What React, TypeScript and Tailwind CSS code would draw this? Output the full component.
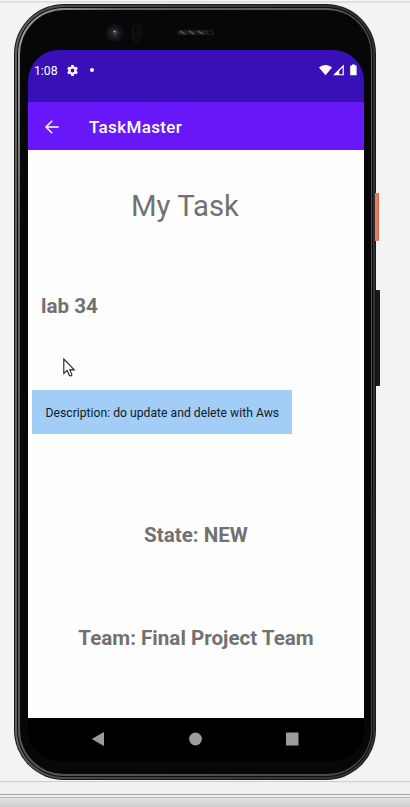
import React from "react";

function StatusBar() {
  return (
    <div className="flex h-[52px] items-start bg-[#3910b8] pt-[14px] pl-[6px] text-white">
      <span className="w-[24px] whitespace-nowrap text-[12.2px] leading-[15px]">1:08</span>
      <svg className="ml-[8px]" width="13" height="13" viewBox="0 0 24 24" fill="white" fillRule="evenodd">
        <path d="M19.43 12.98c.04-.32.07-.64.07-.98s-.03-.66-.07-.98l2.11-1.65c.19-.15.24-.42.12-.64l-2-3.46c-.12-.22-.39-.3-.61-.22l-2.49 1c-.52-.4-1.08-.73-1.69-.98l-.38-2.65A.49.49 0 0 0 14 2h-4c-.25 0-.46.18-.49.42l-.38 2.65c-.61.25-1.17.59-1.69.98l-2.49-1c-.23-.09-.49 0-.61.22l-2 3.46c-.13.22-.07.49.12.64l2.11 1.65c-.04.32-.07.65-.07.98s.03.66.07.98l-2.11 1.65c-.19.15-.24.42-.12.64l2 3.46c.12.22.39.3.61.22l2.49-1c.52.4 1.08.73 1.69.98l.38 2.65c.03.24.24.42.49.42h4c.25 0 .46-.18.49-.42l.38-2.65c.61-.25 1.17-.59 1.69-.98l2.49 1c.23.09.49 0 .61-.22l2-3.46c.12-.22.07-.49-.12-.64l-2.11-1.65zM12 15.5a3.5 3.5 0 1 1 0-7 3.5 3.5 0 0 1 0 7z" />
      </svg>
      <span className="mt-[4px] ml-[11px] size-[4px] rounded-full bg-white" />
      <svg className="mr-[6px] ml-auto" width="39" height="12" viewBox="0 0 39 12" fill="white">
        <path d="M0 3.6C3.5.2 9.5.2 13 3.6L6.5 11.3Z" />
        <path fillRule="evenodd" d="M14 11.3L24.8.6V11.3ZM20.2 10.2H23.6V3.6L20.2 7Z" />
        <path d="M31.2 1.5h1.8V.4h3v1.1h1.6v9.8h-6.4z" />
      </svg>
    </div>
  );
}

function AppBar() {
  return (
    <div className="flex h-[48px] items-center bg-[#6818f8] pt-[1px] pl-[17px] text-white">
      <svg width="14" height="14" viewBox="0 0 14 14" fill="none" stroke="white" strokeWidth="1.5">
        <path d="M13.7 7H1.2M7.2.8L1 7l6.2 6.2" />
      </svg>
      <span className="ml-[30px] text-[17px] leading-[22px] font-medium tracking-[0.35px]">TaskMaster</span>
    </div>
  );
}

function Cursor() {
  return (
    <svg className="mt-[39px] ml-[35px] block" width="13" height="19" viewBox="0 0 13 19" fill="white" stroke="#222" strokeWidth="1.1">
      <path d="M.8 1v14.5l3.3-3.1 2.4 5.2c.8.7 2.5 0 2.4-1l-2.1-4.7h4.5z" />
    </svg>
  );
}

function NavBar() {
  return (
    <svg className="block" width="336" height="42" viewBox="0 0 336 42" fill="#9c9c9c">
      <path d="M63.800 21L75 14.500q1-.5 1 .6v12q0 1-1 .5z" />
      <circle cx="167.500" cy="21" r="6.400" />
      <rect x="258" y="14.500" width="12.500" height="13" rx=".5" />
    </svg>
  );
}

function Screen() {
  return (
    <div className="flex h-[711px] w-[336px] flex-col overflow-hidden rounded-t-[31px] rounded-b-[31px] bg-black">
      <StatusBar />
      <AppBar />
      <main className="h-[568px] bg-[#fefefe] text-[#717171]">
        <h1 className="mt-[36px] pr-[22px] text-center text-[29.3px] leading-[40px] font-normal">My Task</h1>
        <h2 className="mt-[67px] ml-[13px] text-[20.6px] leading-[26px] font-bold">lab 34</h2>
        <Cursor />
        <div className="mt-[13px] ml-[4px] flex h-[44px] w-[260px] items-center bg-[#a2cdf6] pt-[2px] pl-[13.5px] text-[12.2px] whitespace-nowrap text-[#111b25]">
          Description: do update and delete with Aws
        </div>
        <p className="mt-[88px] text-center text-[20.6px] leading-[26px] font-bold">State: NEW</p>
        <p className="mt-[77px] text-center text-[20.6px] leading-[26px] font-bold">Team: Final Project Team</p>
      </main>
      <NavBar />
    </div>
  );
}

function Camera() {
  return (
    <svg className="block" width="336" height="38" viewBox="0 -1 336 38">
      <circle cx="86.500" cy="20" r="8.500" fill="#141416" />
      <circle cx="86.500" cy="20" r="5" fill="#222228" />
      <circle cx="87" cy="19.500" r="2.400" fill="#3d3e52" />
      <circle cx="86.500" cy="18.500" r=".8" fill="#c5c5d5" />
      <rect x="104.500" y="11.500" width="7.500" height="17" rx="3.750" fill="#0a0a0b" stroke="#161617" />
      <path d="M105 20h7" stroke="#161617" />
      <rect x="149" y="17" width="37" height="5" rx="2.500" fill="#1c1c1d" />
      <path d="M152 18l5 3m4-3l5 3m4-3l5 3" stroke="#515153" strokeWidth="1.800" />
      <circle cx="182" cy="19.500" r="1.500" fill="#060606" />
    </svg>
  );
}

function Phone() {
  return (
    <div className="relative mt-[4px] ml-[14px] h-[776px] w-[362px] rounded-[50px] bg-[#1a1a1a] p-[1px]">
      <div className="absolute top-[189px] left-[361px] h-[48px] w-[4px] rounded-r-[1px] border-r border-[#c8684f] bg-[#f47a55]" />
      <div className="absolute top-[286px] left-[361px] h-[96px] w-[5px] rounded-r-[1px] bg-[#181818]" />
      <div className="h-full rounded-[49px] bg-linear-to-r from-[#606060] from-0% via-[#484848] via-15% to-[#303030] p-[2px]">
        <div className="h-full rounded-[47px] bg-[#0d0d0d] p-[1px]">
          <div className="h-full rounded-[46px] bg-linear-to-br from-[#a5a5a5] from-0% via-[#626262] via-15% to-[#454545] p-[2px] pr-[1px]">
            <div className="h-full rounded-[44px] bg-[#070709] px-[8px] pt-[2px]">
              <Camera />
              <Screen />
            </div>
          </div>
        </div>
      </div>
    </div>
  );
}

export default function App() {
  return (
    <div className="flex h-[807px] w-[410px] flex-col overflow-hidden bg-[#f3f3f3] font-['Roboto','Liberation_Sans',sans-serif]">
      <div className="-mb-[3px] h-[3px] shrink-0 border-b-2 border-[#dedede] bg-[#f5f5f5]" />
      <Phone />
      <div className="mt-[1px] h-[13px] border-t border-[#cfcfcf] bg-[#f0f0f0]" />
      <div className="h-[3px] border-t border-[#a5a5a5] bg-[#ededed]" />
      <div className="h-[10px] border-t border-[#b8b8b8] bg-linear-to-b from-[#e4e4e4] to-[#cecece]" />
    </div>
  );
}
